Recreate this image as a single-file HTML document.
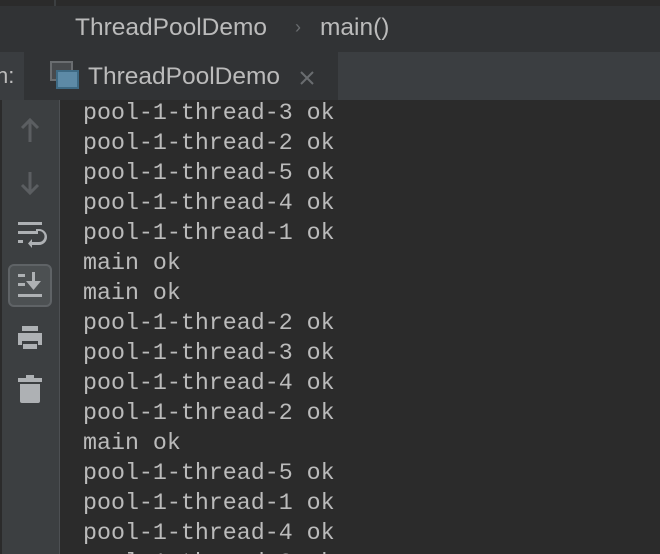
<!DOCTYPE html>
<html style="overflow:hidden;width:660px;height:554px"><head><style>
body{margin:0;width:660px;height:554px;overflow:hidden;background:#2b2b2b;position:relative;font-family:"Liberation Sans",sans-serif}
.a{position:absolute}
.out{position:absolute;left:83px;top:98px;font-family:"Liberation Mono",monospace;font-size:23.3px;line-height:30px;color:#bbbbbb;white-space:pre;margin:0}
</style></head><body>
<div class="a" style="left:0;top:0;width:660px;height:6px;background:#2b2b2b"></div>
<div class="a" style="left:54px;top:0;width:2px;height:6px;background:#3c3f41"></div>
<div class="a" style="left:0;top:6px;width:660px;height:46px;background:#313335"></div>
<div class="a" style="left:75px;top:14px;font-size:24.5px;color:#bbbbbb">ThreadPoolDemo</div>
<div class="a" style="left:295px;top:17px;font-size:18px;color:#6a6d70">›</div>
<div class="a" style="left:320px;top:14px;font-size:24.5px;color:#bbbbbb">main()</div>
<div class="a" style="left:0;top:52px;width:24px;height:48px;background:#3a3d40"></div>
<div class="a" style="left:-4px;top:63px;font-size:22px;color:#bbbbbb">n:</div>
<div class="a" style="left:24px;top:52px;width:314px;height:48px;background:#313335"></div>
<div class="a" style="left:338px;top:52px;width:322px;height:48px;background:#3b3e41"></div>
<svg class="a" style="left:50px;top:61px" width="30" height="30"><rect x="1" y="1" width="21" height="18" fill="#474a4d" stroke="#6a6d70" stroke-width="2"/><rect x="7" y="10" width="21" height="17" fill="#5d8aa6" stroke="#3e6a84" stroke-width="2"/></svg>
<div class="a" style="left:88px;top:63px;font-size:24.5px;color:#bbbbbb">ThreadPoolDemo</div>
<svg class="a" style="left:300px;top:71px" width="14" height="14"><path d="M1 1L13 13M13 1L1 13" stroke="#6a6d70" stroke-width="2"/></svg>
<div class="a" style="left:2px;top:100px;width:57px;height:454px;background:#3c3f41"></div>
<div class="a" style="left:59px;top:100px;width:1px;height:454px;background:#4d5053"></div>
<svg class="a" style="left:0;top:100px" width="60" height="454">
<path d="M30 42V20M22 28L30 20L38 28" stroke="#5b5e61" stroke-width="3" fill="none"/>
<path d="M30 72V93M22 85L30 93L38 85" stroke="#5b5e61" stroke-width="3" fill="none"/>
<g fill="#aeb1b4"><rect x="18" y="122" width="24" height="3"/><rect x="18" y="131" width="20" height="3"/><rect x="18" y="140" width="5" height="3"/><path d="M36 131h3a5 5 0 0 1 0 11h-7v-3l-4 4.5 4 4.5v-3h7a8 8 0 0 0 0-16h-3z"/></g>
<rect x="9" y="165" width="42" height="41" rx="5" fill="#4c5052" stroke="#5f6366" stroke-width="2"/>
<g fill="#aeb1b4"><rect x="18" y="174" width="7" height="3"/><rect x="18" y="183" width="7" height="3"/><rect x="18" y="194" width="24" height="3"/><rect x="32" y="172" width="3" height="10"/><path d="M26 181h15l-7.5 9z"/>
<rect x="22" y="226" width="16" height="5"/><path d="M18 233h24v12h-4v-4H22v4h-4z"/><rect x="23" y="244" width="14" height="5"/>
<rect x="18" y="278" width="24" height="4"/><rect x="26" y="275" width="8" height="4"/><path d="M20 284h20v17a2 2 0 0 1-2 2H22a2 2 0 0 1-2-2z"/></g>
</svg>
<pre class="out">pool-1-thread-3 ok
pool-1-thread-2 ok
pool-1-thread-5 ok
pool-1-thread-4 ok
pool-1-thread-1 ok
main ok
main ok
pool-1-thread-2 ok
pool-1-thread-3 ok
pool-1-thread-4 ok
pool-1-thread-2 ok
main ok
pool-1-thread-5 ok
pool-1-thread-1 ok
pool-1-thread-4 ok
pool-1-thread-3 ok</pre>
</body></html>
